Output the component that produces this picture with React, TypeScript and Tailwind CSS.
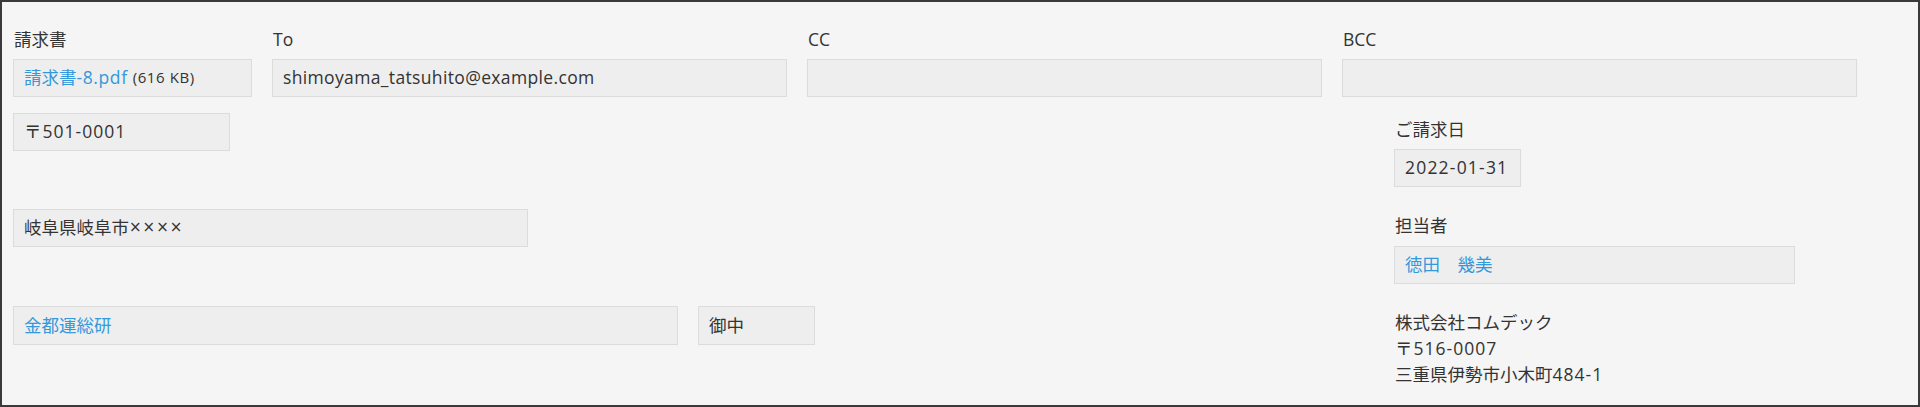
import React from "react";

const font = { fontFamily: '"Open Sans", "Noto Sans CJK JP", sans-serif' };

function Box({ w, children, h = "h-[38px]" }: { w: string; children?: React.ReactNode; h?: string }) {
  return (
    <div
      className={`${w} ${h} flex items-center border border-[#dcdcdc] bg-[#eeeeee] pl-[10px] pb-[2px] leading-[26px] text-[#333333] whitespace-nowrap overflow-hidden`}
    >
      {children}
    </div>
  );
}

function Field({ label, w, children }: { label: string; w: string; children?: React.ReactNode }) {
  return (
    <div className={`flex flex-col ${w}`}>
      <div className="leading-[26px] pl-[1px] text-[#333333] mb-[7px]">{label}</div>
      <Box w="w-full">{children}</Box>
    </div>
  );
}

export default function App() {
  return (
    <div
      className="w-[1920px] h-[407px] border-2 border-[#3a3a3a] bg-[#f5f5f5] px-[11px] pt-[24px] text-[17.5px] text-[#333333] overflow-hidden"
      style={font}
    >
      <div className="flex gap-[20px]">
        <Field label="請求書" w="w-[239px]">
          <span className="text-[#3498db]">
            請求書<span className="tracking-[0.6px]">-8.pdf</span>
          </span>
          <span className="ml-[5px] text-[15px] tracking-[0.6px] text-[#333333]">(616 KB)</span>
        </Field>
        <Field label="To" w="w-[515px]">
          <span className="tracking-[0.35px]">shimoyama_tatsuhito@example.com</span>
        </Field>
        <Field label="CC" w="w-[515px]" />
        <Field label="BCC" w="w-[515px]" />
      </div>

      <div className="flex mt-[16px]">
        <div className="w-[1381px] flex flex-col">
          <Box w="w-[217px]">
            <span className="tracking-[1px]">〒501-0001</span>
          </Box>
          <div className="mt-[58px]">
            <Box w="w-[515px]">
              岐阜県岐阜市
              <span className="tracking-[1px]" style={{ fontFamily: '"DejaVu Sans", sans-serif', fontSize: "15px" }}>
                ××××
              </span>
            </Box>
          </div>
          <div className="mt-[59px] flex gap-[20px]">
            <Box w="w-[665px]" h="h-[39px]">
              <span className="text-[#3498db]">金都運総研</span>
            </Box>
            <Box w="w-[117px]" h="h-[39px]">御中</Box>
          </div>
        </div>

        <div className="flex flex-col pt-[3px]">
          <div className="leading-[26px] pl-[1px] mb-[7px]">ご請求日</div>
          <Box w="w-[127px]">
            <span className="tracking-[1.2px]">2022-01-31</span>
          </Box>
          <div className="leading-[26px] pl-[1px] mt-[25px] mb-[8px]">担当者</div>
          <Box w="w-[401px]">
            <span className="text-[#3498db]">徳田　幾美</span>
          </Box>
          <div className="mt-[25px] leading-[26px] pl-[1px]">
            <div>株式会社コムデック</div>
            <div className="tracking-[1px]">〒516-0007</div>
            <div>
              三重県伊勢市小木町<span className="tracking-[1px]">484-1</span>
            </div>
          </div>
        </div>
      </div>
    </div>
  );
}
